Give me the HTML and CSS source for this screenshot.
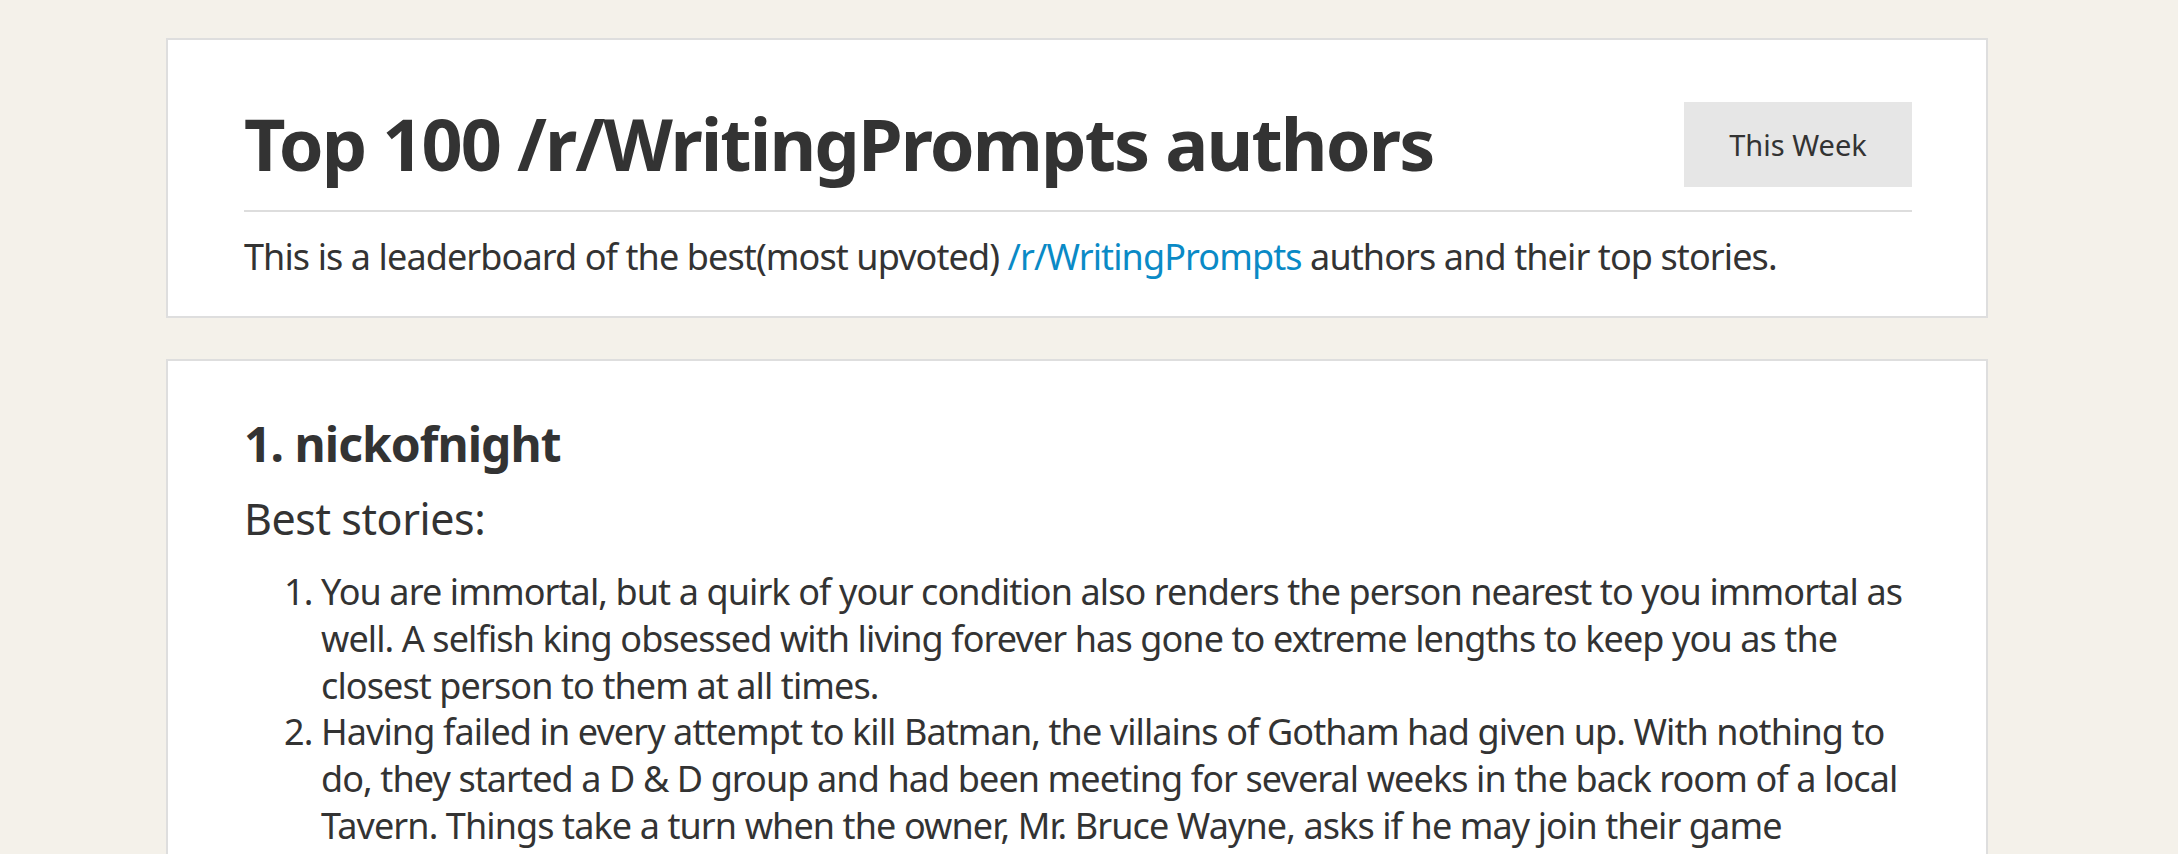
FILE: index.html
```html
<!DOCTYPE html>
<html lang="en">
<head>
<meta charset="utf-8">
<title>Top 100 /r/WritingPrompts authors</title>
<link rel="stylesheet" href="styles.css">
</head>
<body>
<main class="page">
  <section class="card intro">
    <div class="intro-head">
      <h1 class="title">Top 100 /r/WritingPrompts authors</h1>
      <button class="period-btn" type="button">This Week</button>
    </div>
    <hr class="rule">
    <p class="lead">This is a leaderboard of the best(most upvoted) <a class="link" href="#">/r/WritingPrompts</a> authors and their top stories.</p>
  </section>

  <section class="card author">
    <h2 class="author-name">1. nickofnight</h2>
    <h3 class="stories-label">Best stories:</h3>
    <ol class="stories">
      <li>You are immortal, but a quirk of your condition also renders the person nearest to you immortal as well. A selfish king obsessed with living forever has gone to extreme lengths to keep you as the closest person to them at all times.</li>
      <li>Having failed in every attempt to kill Batman, the villains of Gotham had given up. With nothing to do, they started a D &amp; D group and had been meeting for several weeks in the back room of a local Tavern. Things take a turn when the owner, Mr. Bruce Wayne, asks if he may join their game</li>
    </ol>
  </section>
</main>
</body>
</html>
```

FILE: styles.css
```css
html, body {
  margin: 0;
  padding: 0;
}

body {
  background: #f4f1ea;
  color: #333333;
  font-family: "Noto Sans", "Open Sans", "Liberation Sans", sans-serif;
  font-size: 36px;
  line-height: 1.3;
  letter-spacing: -0.025em;
}

.page {
  width: 1822px;
  margin-left: 166px;
  padding-top: 38px;
  display: flex;
  flex-direction: column;
  gap: 41px;
}

.card {
  background: #ffffff;
  border: 2px solid #dedede;
  padding: 0 74px 0 76px;
}

.intro {
  padding-top: 60px;
  padding-bottom: 35px;
}

.intro-head {
  display: flex;
  align-items: center;
  justify-content: space-between;
}

.title {
  margin: 0;
  font-size: 72px;
  font-weight: 700;
  line-height: 1.2;
  letter-spacing: -0.026em;
}

.period-btn {
  background: #e6e6e6;
  border: none;
  color: #333333;
  font-family: "Noto Sans", "Open Sans", "Liberation Sans", sans-serif;
  font-size: 29px;
  letter-spacing: 0;
  width: 228px;
  height: 85px;
  padding: 0;
  margin-top: 2px;
  cursor: pointer;
}

.rule {
  border: none;
  height: 2px;
  background: #dddddd;
  margin: 23px 0 22px;
}

.lead {
  margin: 0;
}

.link {
  color: #0a8ac6;
  text-decoration: none;
}

.author {
  padding-top: 54px;
  padding-bottom: 40px;
}

.author-name {
  margin: 0;
  font-size: 48px;
  font-weight: 700;
  line-height: 1.2;
  letter-spacing: -0.02em;
}

.stories-label {
  margin: 21px 0 0;
  font-size: 43px;
  font-weight: 400;
  line-height: 1.2;
  letter-spacing: -0.01em;
}

.stories {
  margin: 24px 0 0;
  padding-left: 77px;
}
```
